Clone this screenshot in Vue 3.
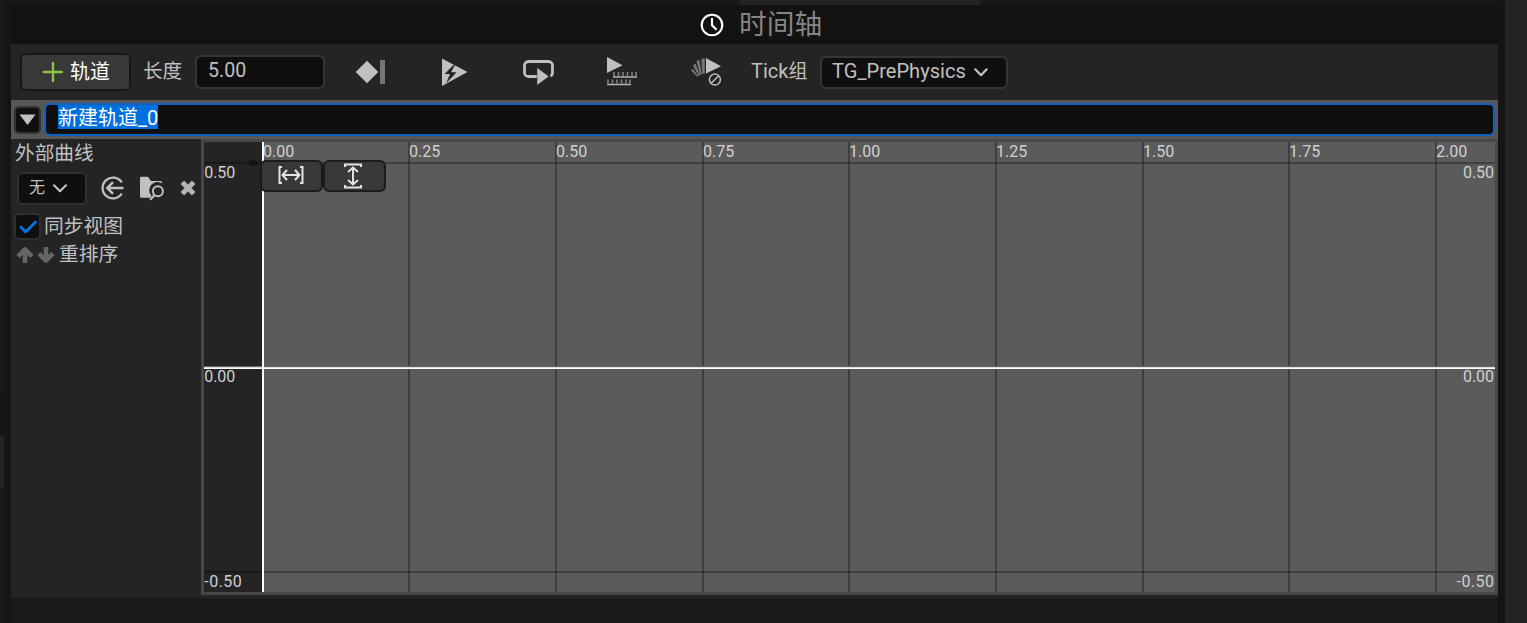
<script setup>
const columns = [0.25, 0.5, 0.75, 1, 1.25, 1.5, 1.75, 2].map((t) => ({
  label: t.toFixed(2),
  x: Math.round(58.75 + t * 586.6),
}))
const rows = [
  { label: '0.50', line: 20, text: 36 },
  { label: '0.00', line: 225, text: 240 },
  { label: '-0.50', line: 429, text: 445 },
]
</script>

<template>
  <div class="editor">
    <aside class="left-edge"><i class="upper"></i><i class="gap"></i><i class="mid"></i><i class="rest"></i></aside>
    <main class="window">
      <div class="tab-strip"><i></i></div>
      <header class="title">
        <svg width="24" height="24" viewBox="0 0 24 24" fill="none" stroke="#fff" stroke-width="2.1">
          <circle cx="12" cy="12" r="10.3" />
          <path d="M12 5v7.2l4.6 4.5" />
        </svg>
        <h1>时间轴</h1>
      </header>

      <div class="toolbar">
        <button class="add-track">
          <svg width="20" height="20" viewBox="0 0 20 20" stroke="#8bc24a" stroke-width="2.4" stroke-linecap="round">
            <path d="M10 1v18M1 10h18" />
          </svg>
          <span>轨道</span>
        </button>
        <span class="length-label">长度</span>
        <div class="length-field">5.00</div>
        <div class="tools">
          <svg width="84" height="40" viewBox="0 0 84 40">
            <path d="M12 8.800 23.300 20 12 31.200.7 20z" fill="#c0c0c0" />
            <path d="M25 8h5v24h-5z" fill="#757575" />
          </svg>
          <svg width="84" height="40" viewBox="0 0 84 40">
            <path d="M3 6.500 28.500 20 3 34z" fill="#c0c0c0" />
            <path d="M14.500 13 5.500 22h5.500L7 31.500 17.500 20.300H12l4-7.300z" fill="#242424" />
          </svg>
          <svg width="84" height="40" viewBox="0 0 84 40">
            <path d="M14 24.500H5.500a4 4 0 0 1-4-4v-7a4 4 0 0 1 4-4h20a4 4 0 0 1 4 4v7q0 2.500-2 3.500" fill="none" stroke="#c0c0c0" stroke-width="2.800" />
            <path d="M14 15.500 26 24.500l-12 8.700z" fill="#c0c0c0" stroke="#242424" stroke-width=".5" />
          </svg>
          <svg width="84" height="40" viewBox="0 0 84 40">
            <path d="M0 5 15.500 13.300 0 21z" fill="#c0c0c0" />
            <path d="M6 25h24M0 32.500h24" stroke="#b4b4b4" stroke-width="1.700" />
            <path d="M7 20v4m4.500-4v4m4.500-4v4m4.500-4v4m4.500-4v4m4-4v4M1 27.500v4m4.500-4v4m4.500-4v4m4.500-4v4m4.500-4v4m4-4v4" stroke="#858585" stroke-width="1.500" />
          </svg>
          <svg width="60" height="40" viewBox="0 0 60 40">
            <path d="M15 6 30 14.200 15 21.500z" fill="#c0c0c0" />
            <path d="M10.300 7 13.800 6.200v15.500h-2.400zM5.400 8.900l2.900-1.100 2.700 14.700-1.700.5zM2 13.500l2.500-1.900 4.500 11.600-1.300.9zM0 18.400l1.700-1.600 5.500 7.200-.9.800z" fill="#777" />
            <circle cx="23.900" cy="27.600" r="5.500" fill="none" stroke="#bdbdbd" stroke-width="1.500" />
            <path d="m20.200 31.300 7.500-7.500" stroke="#bdbdbd" stroke-width="1.500" />
          </svg>
        </div>
        <span class="tick-label">Tick<span class="cjk">组</span></span>
        <div class="tick-select">
          <span>TG_PrePhysics</span>
          <svg width="14" height="9" viewBox="0 0 14 9" fill="none" stroke="#c4c4c4" stroke-width="2.200" stroke-linecap="round" stroke-linejoin="round"><path d="m1.300 1.300 5.700 5.900 5.700-5.900" /></svg>
        </div>
      </div>

      <div class="track-name">
        <button class="expander">
          <svg width="17" height="11" viewBox="0 0 17 11"><path d="M.5.500h16L9.300 10q-.8 1-1.600 0z" fill="#c0c0c0" /></svg>
        </button>
        <div class="name-field"><span>新建轨道_0</span></div>
      </div>

      <div class="track-body">
        <section class="options">
          <div class="caption">外部曲线</div>
          <div class="curve-row">
            <div class="curve-select">
              <span>无</span>
              <svg width="14" height="9" viewBox="0 0 14 9" fill="none" stroke="#c8c8c8" stroke-width="2" stroke-linecap="round" stroke-linejoin="round"><path d="m1 1.300 6 6 6-6" /></svg>
            </div>
            <svg class="use" width="24" height="24" viewBox="0 0 24 24" fill="none" stroke="#c0c0c0" stroke-width="2.300">
              <path d="M20.800 6.500A10.400 10.400 0 1 0 20.800 17.500" />
              <path d="M22.500 12H6.500m5.500-5.800L6.300 12l5.700 5.800" stroke-width="2.500" />
            </svg>
            <svg class="browse" width="25" height="25" viewBox="0 0 25 25">
              <path d="M0 2q0-1.300 1.300-1.300H8L11 5h9.500q1.500 0 1.800 2.500A8.300 8.300 0 0 0 11.500 20l-1.300 1.700H1.300Q0 21.700 0 20.400z" fill="#c0c0c0" />
              <circle cx="17.900" cy="15.300" r="5" fill="none" stroke="#c0c0c0" stroke-width="2" />
              <path d="m14.400 19.200-4.300 4.600" stroke="#c0c0c0" stroke-width="2.200" />
            </svg>
            <svg class="clear" width="16" height="16" viewBox="0 0 16 16"><path d="m2.300 2.300 11.400 11.400M13.700 2.300 2.300 13.700" stroke="#b4b4b4" stroke-width="5" /></svg>
          </div>
          <div class="sync-row">
            <div class="checkbox">
              <svg width="18" height="14" viewBox="0 0 18 14" fill="none" stroke="#0074e4" stroke-width="2.800" stroke-linecap="round" stroke-linejoin="round"><path d="m2 7.300 4.700 4.700L16.500 2" /></svg>
            </div>
            <span>同步视图</span>
          </div>
          <div class="order-row">
            <svg width="39" height="18" viewBox="0 0 39 18" fill="none" stroke="#656565" stroke-width="4.600" stroke-linejoin="round">
              <path d="M9 17V3M2 10.300l7-6.800 7 6.800M30 1v14M23 7.700l7 6.800 7-6.800" />
            </svg>
            <span>重排序</span>
          </div>
        </section>

        <section class="graph">
          <svg class="plot" width="1291" height="450" viewBox="0 0 1291 450">
            <rect width="1291" height="450" fill="#5b5b5b" />
            <rect width="59" height="450" fill="#242424" />
            <g fill="#000" fill-opacity=".3">
              <rect v-for="c in columns" :key="c.label" :x="c.x - 1" y="0" width="2" height="450" />
              <rect v-for="r in rows" :key="r.label" x="0" :y="r.line" width="1291" height="2" />
              <rect x="45" y="18" width="8" height="6" />
            </g>
            <rect x="0" y="224" width="1291" height="1" fill="#666" />
            <rect x="0" y="225" width="1291" height="1" fill="#ddd" />
            <rect x="0" y="226" width="1291" height="1" fill="#fff" />
            <rect x="58" y="0" width="2" height="450" fill="#fff" />
            <g class="labels">
              <text x="59" y="15">0.00</text>
              <text v-for="c in columns" :key="c.label" :x="c.x" y="15">{{ c.label }}</text>
              <text v-for="r in rows" :key="'l' + r.label" x="0.300" :y="r.text" :textLength="r.label.length > 4 ? 37.500 : 31">{{ r.label }}</text>
              <text v-for="r in rows" :key="'r' + r.label" :x="r.label.length > 4 ? 1252.500 : 1259" :y="r.text" :textLength="r.label.length > 4 ? 37.500 : 31">{{ r.label }}</text>
            </g>
          </svg>
          <div class="fit-buttons">
            <button class="fit-horizontal">
              <svg width="26" height="18" viewBox="0 0 26 18" fill="none" stroke="#e4e4e4" stroke-width="2">
                <path d="M4 1H1.500v16H4M22 1h2.500v16H22M4.500 9h17M9 4 4.500 9 9 14M17 4l4.500 5-4.500 5" />
              </svg>
            </button>
            <button class="fit-vertical">
              <svg width="18" height="26" viewBox="0 0 18 26" fill="none" stroke="#e4e4e4" stroke-width="2">
                <path d="M1 4V1.500h16V4M1 22v2.500h16V22M9 5v16M4 9l5-4.500L14 9M4 17l5 4.500 5-4.500" />
              </svg>
            </button>
          </div>
        </section>
      </div>
      <footer></footer>
    </main>
    <aside class="right-edge"></aside>
  </div>
</template>

<style>
body {
  margin: 0;
  background: #151515;
  overflow: hidden;
}
</style>

<style scoped>
* {
  box-sizing: border-box;
}
.editor {
  display: grid;
  grid-template-columns: 4px 1487px 22px;
  column-gap: 7px;
  width: 1527px;
  height: 623px;
  background: #151515;
  color: #c0c0c0;
  font: 20px/24px Roboto, "Noto Sans CJK SC", sans-serif;
}
svg {
  display: block;
  flex: none;
  overflow: visible;
}
button {
  padding: 0;
  font: inherit;
  color: inherit;
}
.left-edge {
  display: grid;
  grid-template-rows: 390px 46px 52px 1fr;
}
.left-edge .upper,
.left-edge .rest {
  background: #1a1a1a;
}
.left-edge .mid,
.right-edge {
  background: #242424;
}
.window {
  display: grid;
  grid-template-rows: 5px 39px 56px 39px 459px 25px;
  min-width: 0;
}
.tab-strip {
  background: #181818;
}
.tab-strip i {
  display: block;
  width: 240px;
  height: 5px;
  margin-left: 729px;
  background: #242424;
}
.title {
  display: flex;
  align-items: center;
  padding-left: 689px;
  gap: 15px;
  background: #121212;
}
h1 {
  margin: 0;
  color: #858585;
  font-size: 27.700px;
  font-weight: 400;
  line-height: 38px;
}
.toolbar {
  display: flex;
  align-items: center;
  background: #242424;
}
.add-track {
  display: flex;
  align-items: center;
  width: 111px;
  height: 38px;
  margin-left: 9px;
  padding-left: 21px;
  gap: 7px;
  border: 2px solid #171717;
  border-radius: 6px;
  background: #383838;
  color: #fff;
}
.length-label {
  width: 41px;
  margin-left: 12px;
  font-size: 19.600px;
}
.length-field {
  width: 130px;
  height: 34px;
  margin-left: 11px;
  padding: 1px 11px;
  border: 2px solid #353535;
  border-radius: 6px;
  background: #0f0f0f;
  font-size: 19.600px;
  line-height: 26px;
}
.tools {
  display: flex;
  margin-left: 30px;
}
.tick-label {
  width: 59px;
  white-space: nowrap;
  line-height: 22px;
  padding-bottom: 1px;
}
.cjk {
  font-size: 19px;
}
.tick-select {
  display: flex;
  align-items: center;
  gap: 8px;
  width: 188px;
  height: 33px;
  margin-left: 10px;
  padding-left: 10px;
  border: 2px solid #353535;
  border-radius: 6px;
  background: #0f0f0f;
}
.tick-select span {
  padding-bottom: 2px;
  font-size: 20.100px;
}
.track-name {
  display: flex;
  align-items: center;
  background: #575757;
}
.expander {
  display: grid;
  place-items: center;
  width: 27px;
  height: 28px;
  margin-left: 3px;
  border: 2px solid #343434;
  border-radius: 5px;
  background: #0f0f0f;
}
.name-field {
  width: 1451px;
  height: 33px;
  margin-left: 3px;
  padding: 0 0 0 12px;
  border: 2px solid #0f62bd;
  border-radius: 6px;
  background: #0f0f0f;
  color: #fff;
}
.name-field span {
  display: block;
  width: fit-content;
  height: 24px;
  line-height: 26px;
  background: #0070e0;
}
.track-body {
  display: flex;
  background: #242424;
}
.options {
  width: 190px;
}
.caption {
  margin: 3px 0 0 4px;
  font-size: 19.700px;
}
.curve-row {
  display: flex;
  align-items: center;
  height: 34px;
  margin: 5px 0 0 6px;
}
.curve-select {
  display: flex;
  align-items: center;
  gap: 8px;
  width: 70px;
  height: 33px;
  padding-left: 10px;
  border: 2px solid #303030;
  border-radius: 6px;
  background: #0f0f0f;
  font-size: 16px;
}
.use {
  margin-left: 14px;
}
.browse {
  margin-left: 15px;
}
.clear {
  margin-left: 15px;
}
.sync-row {
  display: flex;
  align-items: center;
  gap: 3px;
  height: 27px;
  margin: 8px 0 0 3px;
}
.checkbox {
  display: grid;
  place-items: center;
  width: 27px;
  height: 27px;
  border: 2px solid #303030;
  border-radius: 5px;
  background: #0f0f0f;
}
.sync-row span {
  font-size: 19.800px;
}
.order-row {
  display: flex;
  align-items: center;
  gap: 4px;
  margin: 3px 0 0 5px;
  font-size: 19.800px;
}
.graph {
  position: relative;
  width: 1297px;
  height: 456px;
  border: 3px solid #474747;
}
.labels {
  fill: #d0d0d0;
  font-size: 16px;
}
.fit-buttons {
  position: absolute;
  left: 56px;
  top: 18px;
  display: flex;
}
.fit-buttons button {
  display: grid;
  place-items: center;
  width: 63px;
  height: 32px;
  border: 2px solid #1b1b1b;
  border-radius: 6px;
  background: #383838;
}
.fit-buttons .fit-horizontal {
  padding: 0 1px 2px 0;
}
.fit-buttons .fit-vertical {
  padding: 0 3px 0 0;
}
footer {
  background: #1a1a1a;
}
</style>
